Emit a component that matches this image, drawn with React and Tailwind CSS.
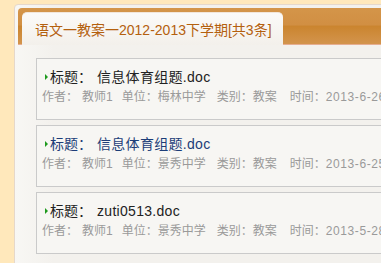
export default function App() {
  const items = [
    { title: "信息体育组题.doc", unit: "梅林中学", date: "2013-6-26", color: "text-[#222222]" },
    { title: "信息体育组题.doc", unit: "景秀中学", date: "2013-6-25", color: "text-[#1c3d78]" },
    { title: "zuti0513.doc", unit: "景秀中学", date: "2013-5-28", color: "text-[#222222]" },
  ];

  return (
    <div className="w-[381px] h-[263px] overflow-hidden bg-[#ffe8bb] pl-[14px] pt-[4px] font-['Liberation_Sans','Noto_Sans_CJK_SC',sans-serif]">
      <div className="w-[480px] h-[320px] rounded-[4px] border border-[#e6d8ca] bg-gradient-to-r from-[#f8f7f4] to-[#f3f1ed] to-[8%] p-[3px]">
        {/* header bar with tab */}
        <div className="h-[37px] rounded-tl-[4px] bg-[linear-gradient(to_bottom,#d49549_0%,#d18f43_45%,#cb852f_50%,#d3954f_100%)] shadow-[inset_0_-1px_0_#e6ad90] pl-[4px] flex items-end">
          <div className="w-[261px] h-[33px] rounded-t-[5px] bg-gradient-to-b from-[#fbfaf8] to-[#f3f0eb] border-t border-[#f2e6da] pl-[13px] pt-[2px] flex items-center">
            <span className="text-[14px] leading-[18px] text-[#b4600e] whitespace-nowrap">
              语文一教案一2012-2013下学期[共3条]
            </span>
          </div>
        </div>

        {/* list */}
        <div className="mt-[13px] ml-[18px] flex flex-col gap-[5px]">
          {items.map((it, i) => (
            <div key={i} className="w-[440px] h-[62px] border border-[#cacaca] bg-[#f7f6f3] pt-[8px]">
              <div className={`flex items-center pl-[8px] text-[14px] leading-[20px] whitespace-nowrap ${it.color}`}>
                <span className="w-0 h-0 border-y-[3px] border-y-transparent border-l-[3px] border-l-[#1e9a1e] mr-[2px]"></span>
                <span>标题：</span>
                <span className="ml-[5px] tracking-[0.3px]">{it.title}</span>
              </div>
              <div className="mt-[2px] pl-[5px] text-[12px] leading-[16px] text-[#9a9a9a] whitespace-nowrap">
                <span>作者：</span>
                <span className="ml-[4px]">教师1</span>
                <span className="ml-[9px]">单位：{it.unit}</span>
                <span className="ml-[11px]">类别：教案</span>
                <span className="ml-[13px]">时间：<span className="tracking-[0.6px]">{it.date}</span></span>
              </div>
            </div>
          ))}
        </div>
      </div>
    </div>
  );
}
